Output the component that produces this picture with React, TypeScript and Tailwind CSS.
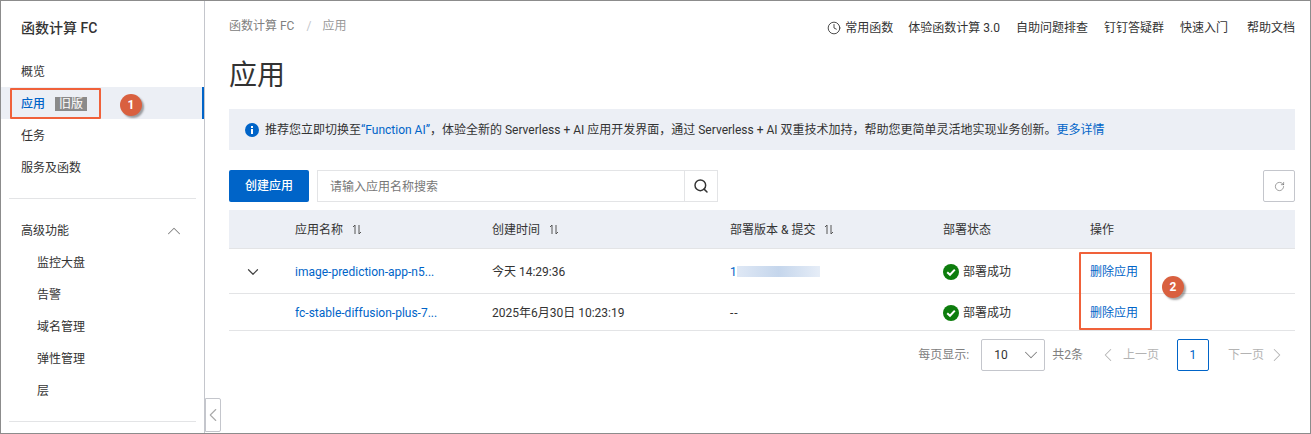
import { ChevronDown, ChevronLeft, ChevronRight, ChevronUp, Clock, RotateCw, Search } from "lucide-react";

const cols = "grid grid-cols-[66px_197px_238px_213px_147px_1fr] items-center";

function SortIcon() {
  return (
    <svg width="10" height="11" viewBox="0 0 10 11" fill="none" stroke="#555" strokeWidth="1" className="ml-[9px]">
      <path d="M1 3 L3 1 V10" />
      <path d="M7 1 V10 L9 8" />
    </svg>
  );
}

function SuccessIcon() {
  return (
    <svg width="16" height="16" viewBox="0 0 16 16" className="mr-1 shrink-0">
      <circle cx="8" cy="8" r="8" fill="#0d7d0d" />
      <path d="M4.2 8.2 L7 10.8 L11.8 5.6" fill="none" stroke="#fff" strokeWidth="2" />
    </svg>
  );
}

function Badge({ n }: { n: number }) {
  return (
    <div className="w-[22px] h-[22px] rounded-full bg-[#d9603f] text-white text-[12px] font-bold flex items-center justify-center shadow-[2px_2px_2px_rgba(0,0,0,0.35)]">
      {n}
    </div>
  );
}

function NavItem({ label, sub }: { label: string; sub?: boolean }) {
  return (
    <div className={`h-8 flex items-center pt-[2px] text-[12px] text-[#333] ${sub ? "pl-9" : "pl-5"}`}>{label}</div>
  );
}

export default function App() {
  return (
    <div
      className="relative w-[1311px] h-[434px] overflow-hidden bg-white border border-[#8c8c8c] flex text-[12px] text-[#333]"
      style={{ fontFamily: 'Roboto, "Noto Sans CJK SC", sans-serif' }}
    >
      {/* sidebar */}
      <aside className="w-[204px] shrink-0 border-r border-[#c4c6cc] flex flex-col">
        <div className="h-[54px] pl-5 pt-[17px] text-[14px] font-medium text-[#333] leading-5">函数计算 FC</div>
        <div>
          <NavItem label="概览" />
          <div className="h-8 flex items-center pt-[2px] pl-5 bg-[#eceff5] border-r-2 border-[#0064c8]">
            <span className="text-[12px] font-medium text-[#0064c8]">应用</span>
            <span className="ml-[10px] w-[32px] h-[14px] bg-[#8a8a8a] text-white text-[12px] leading-[14px] text-center">旧版</span>
          </div>
          <NavItem label="任务" />
          <NavItem label="服务及函数" />
        </div>
        <div className="mx-2 mt-[15px] border-t border-[#e3e4e6]" />
        <div className="mt-[15px] h-8 flex items-center justify-between pt-[2px] pl-5 pr-[19px] text-[12px]">
          高级功能
          <ChevronUp size={22} strokeWidth={1.1} className="text-[#808080]" />
        </div>
        {["监控大盘", "告警", "域名管理", "弹性管理", "层"].map((s) => (
          <NavItem key={s} label={s} sub />
        ))}
        <div className="mx-2 mt-[15px] border-t border-[#e3e4e6]" />
      </aside>

      {/* main */}
      <main className="flex-1 min-w-0 pl-6 pr-[15px]">
        <header className="h-[50px] flex items-center justify-between">
          <div className="flex items-center text-[#808080]">
            <span>函数计算 FC</span>
            <span className="ml-[12px] mr-[11px] text-[#c4c6cc]">/</span>
            <span className="text-[#9a9a9a]">应用</span>
          </div>
          <div className="flex items-center text-[#333] mt-[4px]">
            <Clock size={14} strokeWidth={1.5} className="mr-1" />
            <span>常用函数</span>
            <span className="ml-[15px]">体验函数计算 3.0</span>
            <span className="ml-4">自助问题排查</span>
            <span className="ml-4">钉钉答疑群</span>
            <span className="ml-4">快速入门</span>
            <span className="ml-[19px]">帮助文档</span>
          </div>
        </header>
        <h1 className="h-[58px] text-[28px] leading-[50px] text-[#333]">应用</h1>

        <div className="h-[41px] bg-[#eceff5] flex items-center pl-[16px] pt-[1px]">
          <svg width="14" height="14" viewBox="0 0 14 14" className="mr-[6px] shrink-0">
            <circle cx="7" cy="7" r="7" fill="#0064c8" />
            <rect x="6" y="6" width="2" height="5" fill="#fff" />
            <rect x="6" y="3" width="2" height="2" fill="#fff" />
          </svg>
          <span>
            推荐您立即切换至<span className="text-[#0064c8]">“Function AI”</span>，体验全新的 Serverless + AI 应用开发界面，通过 Serverless + AI 双重技术加持，帮助您更简单灵活地实现业务创新。
            <span className="text-[#0064c8]">更多详情</span>
          </span>
        </div>

        <div className="mt-5 h-8 flex items-center">
          <button className="w-20 h-8 rounded-[2px] bg-[#0064c8] text-white text-[12px] font-medium">创建应用</button>
          <div className="ml-2 w-[401px] h-8 flex border border-[#e3e4e6] bg-white">
            <span className="flex-1 flex items-center pl-3 pt-[1px] text-[#777]">请输入应用名称搜索</span>
            <span className="w-[33px] border-l border-[#e3e4e6] flex items-center justify-center">
              <Search size={16} strokeWidth={2.2} className="text-[#333]" />
            </span>
          </div>
          <button className="ml-auto w-8 h-8 rounded-[2px] border border-[#c4c6cc] flex items-center justify-center">
            <RotateCw size={11} strokeWidth={1.2} className="text-[#555]" />
          </button>
        </div>

        <div className="mt-2">
          <div className={`${cols} h-[39px] bg-[#eceff5] border-b border-[#e3e4e6] pt-[1px]`}>
            <span />
            <span className="flex items-center">应用名称<SortIcon /></span>
            <span className="flex items-center">创建时间<SortIcon /></span>
            <span className="flex items-center">部署版本 &amp; 提交<SortIcon /></span>
            <span>部署状态</span>
            <span>操作</span>
          </div>
          <div className={`${cols} h-[45px] border-b border-[#e3e4e6] pt-[1px]`}>
            <span className="pl-[15px]"><ChevronDown size={18} strokeWidth={1.6} className="text-[#444]" /></span>
            <span className="text-[#0064c8]">image-prediction-app-n5...</span>
            <span>今天 14:29:36</span>
            <span className="flex items-center text-[#0064c8]">
              1
              <span className="w-[83px] h-[11px] bg-gradient-to-r from-[#dfe8f5] via-[#c5d6ec] to-[#e6edf7]" />
            </span>
            <span className="flex items-center"><SuccessIcon />部署成功</span>
            <span className="text-[#0064c8]">删除应用</span>
          </div>
          <div className={`${cols} h-[37px] border-b border-[#e3e4e6] pt-[1px]`}>
            <span />
            <span className="text-[#0064c8]">fc-stable-diffusion-plus-7...</span>
            <span>2025年6月30日 10:23:19</span>
            <span className="tracking-[1px]">--</span>
            <span className="flex items-center"><SuccessIcon />部署成功</span>
            <span className="text-[#0064c8]">删除应用</span>
          </div>
        </div>

        <div className="mt-2 h-8 flex items-center justify-end pr-[7px] text-[#808080]">
          <span>每页显示:</span>
          <div className="ml-3 w-16 h-8 border border-[#c4c6cc] rounded-[2px] flex items-center justify-between pl-3 pr-[2px] text-[#333]">
            10
            <ChevronDown size={22} strokeWidth={1.1} className="text-[#808080]" />
          </div>
          <span className="ml-[7px]">共2条</span>
          <span className="ml-[14px] flex items-center text-[#b3b3b3]"><ChevronLeft size={22} strokeWidth={1.1} className="mr-1" />上一页</span>
          <span className="ml-[18px] w-8 h-8 border border-[#0064c8] rounded-[2px] flex items-center justify-center text-[#0064c8]">1</span>
          <span className="ml-[19px] flex items-center text-[#b3b3b3]">下一页<ChevronRight size={22} strokeWidth={1.1} className="ml-[2px]" /></span>
        </div>
      </main>

      {/* collapse handle */}
      <div className="absolute left-[204px] top-[397px] w-[16px] h-[34px] bg-white border border-[#c4c6cc] rounded-r-[2px] flex items-center justify-center">
        <ChevronLeft size={22} strokeWidth={1.2} className="text-[#aaa] shrink-0" />
      </div>

      {/* annotations */}
      <div className="absolute left-[9px] top-[87px] w-[91px] h-[31px] border-[2px] border-[#f0613a] rounded-[1px]" />
      <div className="absolute left-[119px] top-[93px]"><Badge n={1} /></div>
      <div className="absolute left-[1078px] top-[251px] w-[73px] h-[78px] border-[2px] border-[#f0613a] rounded-[1px]" />
      <div className="absolute left-[1161px] top-[275px]"><Badge n={2} /></div>
    </div>
  );
}
